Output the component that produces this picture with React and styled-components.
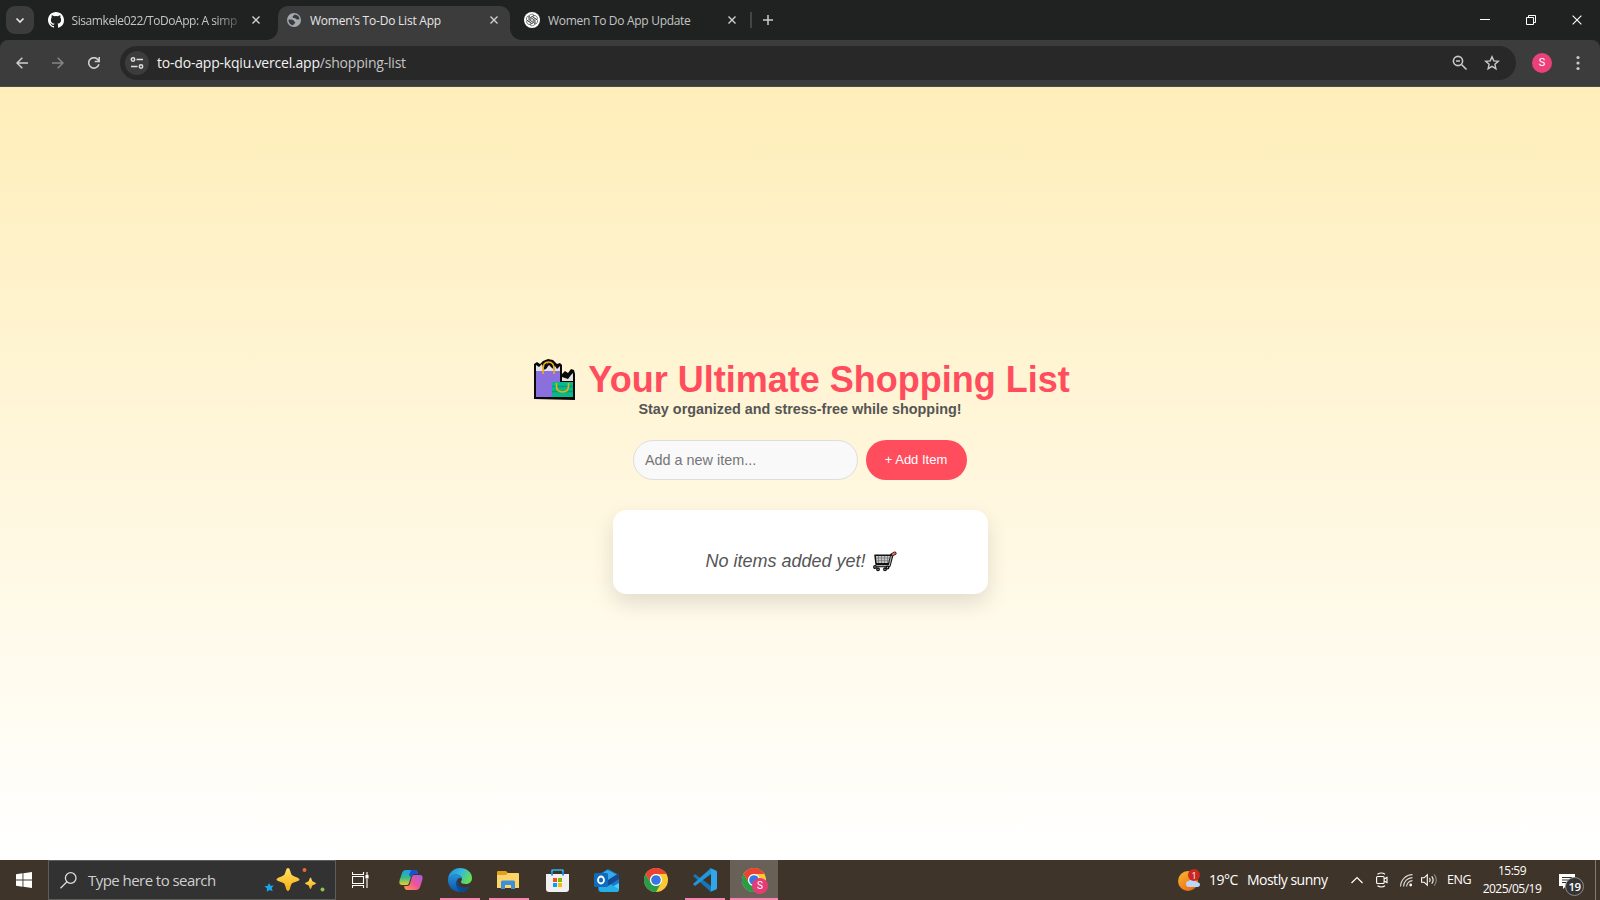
import React from "react";
import styled, { createGlobalStyle } from "styled-components";

const Global = createGlobalStyle`
  * { box-sizing: border-box; }
  body { margin: 0; overflow: hidden; background: #fff; }
`;

const ui = `"Segoe UI", "Open Sans", "Noto Sans", sans-serif`;
const arial = `Arial, "Liberation Sans", sans-serif`;

const Screen = styled.div`
  width: 1600px;
  height: 900px;
  display: flex;
  flex-direction: column;
  overflow: hidden;
  font-family: ${ui};
`;

/* ---------- browser chrome ---------- */
const TabStrip = styled.div`
  height: 40px;
  flex: none;
  display: flex;
  align-items: flex-end;
  background: #202221;
  color: #c9cac9;
`;
const TabSearch = styled.button`
  width: 28px;
  height: 28px;
  margin: 0 6px 6px;
  padding: 0;
  border: 0;
  border-radius: 9px;
  background: #3c3c3c;
  display: grid;
  place-items: center;
`;
const Tab = styled.div`
  position: relative;
  width: ${(p) => p.$width}px;
  height: 34px;
  padding: 0 ${(p) => p.$right || 9}px 6px ${(p) => p.$left}px;
  border-radius: 10px 10px 0 0;
  display: flex;
  align-items: center;
  gap: ${(p) => p.$gap || 8}px;
  background: ${(p) => (p.$active ? "#3c3c3c" : "transparent")};
  color: ${(p) => (p.$active ? "#e6e6e6" : "#c4c5c4")};
  &::before, &::after {
    content: "";
    display: ${(p) => (p.$active ? "block" : "none")};
    position: absolute;
    bottom: 0;
    width: 11px;
    height: 11px;
  }
  &::before { left: -11px; background: radial-gradient(circle at 0 0, transparent 10.5px, #3c3c3c 11px); }
  &::after { right: -11px; background: radial-gradient(circle at 100% 0, transparent 10.5px, #3c3c3c 11px); }
`;
const TabTitle = styled.span`
  flex: 1;
  min-width: 0;
  overflow: hidden;
  white-space: nowrap;
  font-size: 12px;
  line-height: 18px;
  padding-top: 1px;
  letter-spacing: ${(p) => p.$spacing}px;
  ${(p) => p.$fade && "mask-image: linear-gradient(90deg, #000 84%, rgba(0, 0, 0, 0.15) 100%);"}
`;
const CloseSlot = styled.div`
  width: 14px;
  height: 16px;
  display: grid;
  place-items: center;
`;
const TabDivider = styled.div`
  width: 2px;
  height: 16px;
  margin: 0 11px 12px 2px;
  background: #444645;
`;
const NewTab = styled.div`
  height: 40px;
  display: flex;
  align-items: center;
`;
const WindowButtons = styled.div`
  margin-left: auto;
  height: 40px;
  display: flex;
`;
const WindowButton = styled.div`
  width: 46px;
  height: 40px;
  display: grid;
  place-items: center;
`;
const Toolbar = styled.div`
  height: 47px;
  flex: none;
  display: flex;
  align-items: center;
  background: #202221;
`;
const ToolbarInner = styled.div`
  flex: 1;
  height: 47px;
  padding: 0 0 1px;
  display: flex;
  align-items: center;
  border-radius: 8px 8px 0 0;
  border-bottom: 1px solid #4b4a45;
  background: #3c3c3c;
`;
const NavButton = styled.div`
  width: 36px;
  height: 36px;
  display: grid;
  place-items: center;
  opacity: ${(p) => (p.$dim ? 0.5 : 1)};
`;
const NavGroup = styled.div`
  display: flex;
  padding: 0 8px 0 4px;
`;
const Omnibox = styled.div`
  width: 1396px;
  height: 34px;
  padding: 0 16px 0 5px;
  border-radius: 17px;
  background: #282828;
  display: flex;
  align-items: center;
`;
const SiteInfo = styled.div`
  width: 24px;
  height: 24px;
  border-radius: 50%;
  background: #3c3c3c;
  display: grid;
  place-items: center;
`;
const Url = styled.div`
  margin: 0 auto 0 8px;
  font-size: 14px;
  line-height: 20px;
  letter-spacing: -0.2px;
  color: #f2f2f2;
  span { color: #c4c4c4; }
`;
const OmniActions = styled.div`
  display: flex;
  gap: 16px;
`;
const Avatar = styled.div`
  width: 20px;
  height: 20px;
  margin: 0 17px 0 16px;
  border-radius: 50%;
  background: #ec407a;
  color: #fff;
  font: 11px/20px Roboto, sans-serif;
  text-align: center;
`;

/* ---------- page ---------- */
const Page = styled.main`
  height: 773px;
  flex: none;
  padding-top: 272px;
  display: flex;
  flex-direction: column;
  align-items: center;
  background: linear-gradient(#ffeeba, #ffffff);
  font-family: ${arial};
`;
const Title = styled.h1`
  margin: 0;
  height: 41px;
  padding-left: 4px;
  display: flex;
  gap: 12px;
  color: #ff4d5e;
  font-size: 36px;
  line-height: 41px;
  white-space: nowrap;
`;
const Subtitle = styled.p`
  margin: 1px 0 0;
  height: 17px;
  color: #555;
  font-size: 14.4px;
  font-weight: bold;
  line-height: 17px;
`;
const AddForm = styled.div`
  margin-top: 22px;
  display: flex;
  gap: 8px;
`;
const ItemInput = styled.input`
  width: 225px;
  height: 40px;
  padding: 0 11px;
  border: 1px solid #ddd;
  border-radius: 23px;
  outline: 0;
  background: #f9f9f9;
  font: 14.4px ${arial};
  &::placeholder { color: #757575; }
`;
const AddButton = styled.button`
  width: 101px;
  height: 40px;
  padding: 0 1px 2px 0;
  border: 0;
  border-radius: 23px;
  background: #ff4d5e;
  color: #fff;
  font: 13px ${arial};
`;
const ListCard = styled.section`
  width: 375px;
  height: 84px;
  margin-top: 30px;
  padding: 41px 0 0 2px;
  display: flex;
  justify-content: center;
  gap: 7px;
  border-radius: 13.5px;
  background: #fff;
  box-shadow: 0 9px 22px rgba(0, 0, 0, 0.12);
  color: #555;
  font-size: 18px;
  font-style: italic;
  line-height: 21px;
`;

/* ---------- taskbar ---------- */
const Taskbar = styled.footer`
  height: 40px;
  flex: none;
  display: flex;
  background: #3f3429;
  color: #fff;
`;
const StartCell = styled.div`
  width: 48px;
  display: grid;
  place-items: center;
`;
const SearchBox = styled.div`
  width: 288px;
  height: 40px;
  padding: 0 9px 0 11px;
  display: flex;
  align-items: center;
  border: 1px solid #5e5e5c;
  background: #323232;
`;
const SearchText = styled.span`
  margin: 0 auto 1px 11px;
  color: #cfcfcf;
  font-size: 15px;
  letter-spacing: -0.55px;
  white-space: nowrap;
`;
const AppCell = styled.div`
  width: ${(p) => p.$width || 49}px;
  height: 40px;
  padding-right: ${(p) => p.$nudge ?? 1}px;
  display: grid;
  place-items: center;
  position: relative;
  background: ${(p) => (p.$active ? "#696158" : "transparent")};
  &::after {
    content: "";
    display: ${(p) => (p.$open ? "block" : "none")};
    position: absolute;
    bottom: 0;
    left: ${(p) => (p.$active ? 0 : 4)}px;
    right: ${(p) => (p.$active ? 0 : 5)}px;
    height: 2px;
    background: #f884b2;
  }
`;
const Tray = styled.div`
  margin-left: auto;
  display: flex;
  align-items: center;
`;
const Weather = styled.div`
  width: 173px;
  display: flex;
  align-items: center;
  font-size: 14px;
  white-space: nowrap;
`;
const TrayText = styled.span`
  margin-left: ${(p) => p.$left}px;
  margin-bottom: 1px;
  letter-spacing: ${(p) => p.$spacing}px;
  font-size: ${(p) => p.$size || 14}px;
`;
const TrayIcon = styled.div`
  width: ${(p) => p.$width}px;
  display: flex;
`;
const Clock = styled.div`
  width: 80px;
  padding-left: 2px;
  font-size: 12px;
  line-height: 18px;
  text-align: center;
  letter-spacing: -0.5px;
`;
const Notice = styled.div`
  position: relative;
  width: 45px;
  height: 40px;
  padding: 12px 0 0 8px;
  border-right: 1px solid #85796c;
`;
const Count = styled.span`
  position: absolute;
  left: 14px;
  top: 17px;
  width: 19px;
  height: 19px;
  border: 1px solid #8d8d8d;
  border-radius: 50%;
  background: #343434;
  font-size: 11.5px;
  font-weight: 600;
  line-height: 17px;
  letter-spacing: -0.6px;
  text-align: center;
`;
const ScreenEdge = styled.div`
  width: 4px;
`;

const Close = ({ s = 8, c = "#d0d0d0", w = 1.4 }) => (
  <svg width={s} height={s} viewBox="0 0 8 8"><path d="M.5.5l7 7M7.5.5l-7 7" stroke={c} strokeWidth={w * 8 / s} fill="none" /></svg>
);
const TabClose = () => <CloseSlot><Close s={8} /></CloseSlot>;

const GithubMark = () => (
  <svg width="16" height="16" viewBox="0 0 16 16" fill="#fff">
    <path d="M8 0C3.58 0 0 3.58 0 8c0 3.54 2.29 6.53 5.47 7.59.4.07.55-.17.55-.38v-1.33c-2.23.48-2.7-1.07-2.7-1.07-.36-.92-.89-1.17-.89-1.17-.73-.5.05-.49.05-.49.81.06 1.23.83 1.23.83.72 1.23 1.88.87 2.34.67.07-.52.28-.87.51-1.07-1.78-.2-3.65-.89-3.65-3.95 0-.87.31-1.59.82-2.15-.08-.2-.36-1.02.08-2.12 0 0 .67-.21 2.2.82a7.7 7.7 0 0 1 4 0c1.53-1.04 2.2-.82 2.2-.82.44 1.1.16 1.92.08 2.12.51.56.82 1.27.82 2.15 0 3.07-1.87 3.75-3.65 3.95.29.25.54.73.54 1.48v2.2c0 .21.15.46.55.38A8 8 0 0 0 16 8c0-4.42-3.58-8-8-8Z" />
  </svg>
);
const Globe = () => (
  <svg width="14" height="14" viewBox="0 0 14 14">
    <circle cx="7" cy="7" r="7" fill="#a3a9b1" />
    <path d="M7.4 1.6c-.3 1.5-1.9 1.2-1.8 2.4 0 1 .8.9 1.9.9 1.5 0 1.1 1.5 2.4 1.6 1.2 0 1.7-.4 2.6-.2.1-2.3-1.9-4.6-5.1-4.7ZM1.5 6.5c1.4.2 3.7-.1 4.7.6 1 .8.4 1.3 1.4 1.6 1 .2.8 1.2.2 1.5-.9.4-.8 1.5-1.8 2.1C3.2 12 1.3 9.500 1.5 6.500Z" fill="#3c3c3c" />
  </svg>
);
const GptMark = () => (
  <svg width="16" height="16" viewBox="0 0 16 16">
    <circle cx="8" cy="8" r="8" fill="#fff" />
    <g fill="none" stroke="#333" strokeWidth=".6">
      {[0, 60, 120, 180, 240, 300].map((a) => (
        <path key={a} transform={`rotate(${a} 8 8)`} d="M5 8.600V5a2.800 2.800 0 0 1 5.200-1.500L6.700 5.500v3.400" />
      ))}
    </g>
  </svg>
);
const Bags = () => (
  <svg width="42" height="41" viewBox="0 0 42 41">
    <path d="M0 40V5l3-2 3 2 3-3 5-2 5 1 4 4 3-1 2 2v9l3-3 3 2 3-4 3 1 1 4v26Z" fill="#0b0908" />
    <path d="M2 12V6l3 2 3-3 1 4 5-5 5 5 2-2 2 3 3-3v5Z M28 22v-4l3 1 3 1 3-4 2-2v8Z" fill="#e3e0e6" />
    <path d="m9 11 2-5 4-2 4 2 2 5-3-2-3-3-3 4Z" fill="#0b0908" />
    <path d="M2 12h24v26H2Z" fill="#8b6fdf" />
    <path d="M18 23h21v15H18Z" fill="#08b98c" />
    <path d="M18 27.500h21M18 32.500h21" stroke="#079d7c" strokeWidth="1.500" />
    <path d="M9 15V10q0-7 5.500-7T20 10v5" fill="none" stroke="#eeb011" strokeWidth="1.600" />
    <path d="M22.500 24v3q0 6 6 6t6-6v-3" fill="none" stroke="#eeb011" strokeWidth="1.600" />
  </svg>
);
const Cart = () => (
  <svg width="24" height="21" viewBox="0 0 24 21">
    <path d="M21.800 2.300 18.800 4 16 14.500H4" fill="none" stroke="#111" strokeWidth="3.400" strokeLinecap="round" strokeLinejoin="round" />
    <path d="M2 4.200H18L15.700 12.800H3Z" fill="#c9c9c9" stroke="#111" strokeWidth="1.500" strokeLinejoin="round" />
    <path d="M3 7h13.500M3.500 9.700h12.700M5.500 5v7M8.500 5v7M11.500 5v7M14.500 5v7" stroke="#777" strokeWidth=".8" />
    <path d="M3 14.600h13.200L18.500 5" fill="none" stroke="#aaa" strokeWidth="1.200" />
    <path d="m19.800 3.400 2-1.200" stroke="#f06a58" strokeWidth="2" strokeLinecap="round" />
    <g fill="#bbb" stroke="#111" strokeWidth="1.300"><circle cx="2" cy="16" r="1.300" /><circle cx="5" cy="18.300" r="1.300" /><circle cx="12" cy="18.300" r="1.300" /><circle cx="14.500" cy="16.500" r="1.300" /></g>
  </svg>
);
const Sparkles = () => (
  <svg width="62" height="26" viewBox="0 0 62 26">
    <defs><linearGradient id="spark" x2="0" y2="1"><stop stopColor="#ffe063" /><stop offset="1" stopColor="#f6ad12" /></linearGradient></defs>
    <path d="M24 1c2 0 2.200 3.500 3.500 6.500 1 2 8 3 8 5s-7 2.500-8 4.500C26 20 26 24 24 24s-2-4-3.500-7c-1-2-8-2.500-8-4.500s7-3 8-5C22 4.500 22 1 24 1Z" fill="url(#spark)" />
    <path d="M46.500 10.500c1 0 1 2.500 1.800 3.500s3.700 1.300 3.700 2.300-2.900 1.300-3.700 2.300-.8 3.500-1.800 3.500-1-2.500-1.800-3.500-3.700-1.300-3.700-2.300 2.900-1.300 3.700-2.300.8-3.500 1.800-3.500Z" fill="url(#spark)" />
    <path d="m5 16 1.500 2.700 3.200-.2-2 2.500 1 3.200-3-1.200-2.900 1.800.2-3.300L.5 19.300l3.200-.6Z" fill="#16a5ee" />
    <circle cx="40.500" cy="3" r="2" fill="#f26730" /><circle cx="58.500" cy="22.500" r="2" fill="#8cc34b" />
  </svg>
);
const Copilot = () => (
  <svg width="24" height="22" viewBox="0 0 24 22">
    <defs>
      <linearGradient id="cpa" x2="0" y2="1"><stop stopColor="#1f9df0" /><stop offset=".5" stopColor="#36b98b" /><stop offset="1" stopColor="#e7d12a" /></linearGradient>
      <linearGradient id="cpb" x1="1" x2="0" y2="1"><stop stopColor="#a65bea" /><stop offset=".5" stopColor="#ee5596" /><stop offset="1" stopColor="#ff9a4b" /></linearGradient>
    </defs>
    <path d="M7 1h9c2 0 2.500 2 3 4h-4c-2 0-2.500 1-3 3l-2 6c-.5 1.500-1 2-3 2H3c-3 0-3-3-2-6l2-6c.7-2 2-3 4-3Z" fill="url(#cpa)" />
    <path d="M12 1h4c2 0 2.500 2 3 4h-4c-2 0-2.700 1-3.300 3L10 6Z" fill="#1554d0" />
    <path d="M17 21H8c-2 0-2.500-2-3-4h3c2 0 2.500-1 3-2.500L13 8c.5-1.500 1-2 3-2h5c3 0 3 3 2 6l-2 6c-.7 2-2 3-4 3Z" fill="url(#cpb)" />
  </svg>
);
const EdgeLogo = () => (
  <svg width="24" height="24" viewBox="0 0 24 24">
    <defs>
      <linearGradient id="ega" x2="1" y2=".4"><stop stopColor="#1c8bd9" /><stop offset=".55" stopColor="#35b9de" /><stop offset="1" stopColor="#64dc59" /></linearGradient>
      <linearGradient id="egb" x2="0" y2="1"><stop stopColor="#2592df" /><stop offset="1" stopColor="#0d54a5" /></linearGradient>
    </defs>
    <path d="M0 11C1 4 6 0 12 0c7 0 12 4.500 12 10 0 4-3 6-6.500 6-3 0-4.500-1-4.500-2s1-1.500 1-3c0-3-3-4.500-6-4.500C4.500 6.500 1.500 8 0 11Z" fill="url(#ega)" />
    <path d="M0 11c1.500-3 4.500-4.500 8-4.500 3 0 6 1.500 6 4.500-1-1.500-5-2-5 2.500 0 5 5 8 12 5.500C19 22 16 24 12 24 5 24 0 19 0 12Z" fill="url(#egb)" />
    <path d="M9 12c-2 3-1 9 4 12 4 0 7-2 9-5.500-5 3-13 1-13-6.500Z" fill="#0b4a90" />
  </svg>
);
const Folder = () => (
  <svg width="22" height="19" viewBox="0 0 22 19">
    <path d="M0 1q0-1 1-1h8l2 2h10v5H0Z" fill="#e4a01c" /><path d="M0 4h9l2-2h10q1 0 1 1v14H0Z" fill="#fbd568" />
    <path d="M4 18v-7q0-1.500 1.500-1.500h11Q18 9.500 18 11v7h-4v-4H8v4Z" fill="#3c8fd8" />
  </svg>
);
const Store = () => (
  <svg width="23" height="23" viewBox="0 0 23 23">
    <path d="M6 6V1.500Q6 1 6.500 1h10q.5 0 .5.500V6" fill="none" stroke="#2cb4f2" strokeWidth="1.700" />
    <path d="M0 5h23v15q0 3-3 3H3q-3 0-3-3Z" fill="#f0f0f1" /><path d="M5.200 6.500V3h1.700v3.500ZM16.200 6.500V3h1.700v3.500Z" fill="#1684d3" />
    <path d="M7 9h4v4H7Z" fill="#f25022" /><path d="M12 9h4v4h-4Z" fill="#7fba00" /><path d="M7 14h4v4H7Z" fill="#00a4ef" /><path d="M12 14h4v4h-4Z" fill="#ffb900" />
  </svg>
);
const Outlook = () => (
  <svg width="25" height="23" viewBox="0 0 25 23">
    <path d="m4 6 9-5.500q1-.5 2 0L25 6v14q0 3-3 3H7q-3 0-3-3Z" fill="#1c78cf" />
    <path d="m9 4 4.500-3 10 5L14 12Z" fill="#38a9ea" />
    <path d="M25 10v10q0 3-3 3H9l16-9Z" fill="#50d0f5" /><path d="M5 17 14 14l11 6q-.500 3-3 3H8q-3 0-3-3Z" fill="#25aee8" />
    <path d="M25 4v6l-11 7v-6Z" fill="#154a91" /><rect y="4" width="14" height="14" rx="1.500" fill="#0f6cbd" />
    <ellipse cx="7" cy="11" rx="3" ry="3.500" fill="none" stroke="#fff" strokeWidth="1.800" />
  </svg>
);
const Chrome = () => (
  <svg width="24" height="24" viewBox="0 0 24 24">
    <circle cx="12" cy="12" r="12" fill="#fbc934" />
    <path d="M1.600 6A12 12 0 0 1 22.400 6H12a6 6 0 0 0-5.200 9Z" fill="#ea4335" />
    <path d="M1.600 6 6.800 15a6 6 0 0 0 10.400 0L12 24A12 12 0 0 1 1.600 6Z" fill="#279c4a" />
    <circle cx="12" cy="12" r="6" fill="#fff" /><circle cx="12" cy="12" r="4.800" fill="#3478e5" />
  </svg>
);
const ProfileChrome = styled.div`
  position: relative;
  width: 24px;
  height: 24px;
`;
const ProfileBadge = styled.span`
  position: absolute;
  left: 10px;
  top: 10px;
  width: 16px;
  height: 16px;
  border-radius: 50%;
  background: #e63c76;
  color: #fff;
  font: 10px/16px Roboto, sans-serif;
  text-align: center;
`;
const Code = () => (
  <svg width="24" height="24" viewBox="0 0 24 24">
    <path d="m0 8 2-2 16 12v6L0 8Z" fill="#1676ba" /><path d="m0 16 2 2L18 6V0L0 16Z" fill="#2196d9" />
    <path d="m17 0 6 2.500q1 .500 1 1.500v16q0 1-1 1.500L17 24q1-.500 1-2V2q0-1.500-1-2Z" fill="#31a6ed" />
  </svg>
);
const WeatherIcon = () => (
  <svg width="24" height="24" viewBox="0 0 24 24">
    <defs><linearGradient id="sun" x2=".7" y2="1"><stop stopColor="#f8ba32" /><stop offset="1" stopColor="#ee6a12" /></linearGradient></defs>
    <circle cx="10" cy="13" r="10" fill="url(#sun)" />
    <path d="M11 19a3 3 0 0 1 0-6 4 4 0 0 1 7.500 1c2 0 3.500 1 3.500 2.500S21 19 19.500 19Z" fill="#bcd6f8" />
    <circle cx="16" cy="7" r="6" fill="#c8281f" />
    <text x="16" y="10.500" fill="#fff" fontSize="9" textAnchor="middle" fontFamily="Open Sans">1</text>
  </svg>
);

export default function App() {
  return (
    <Screen>
      <Global />
      <TabStrip>
        <TabSearch><svg width="10" height="7" viewBox="0 0 10 7"><path d="m1.500 1.500 3.500 3.500 3.500-3.500" fill="none" stroke="#e5e5e5" strokeWidth="1.700" /></svg></TabSearch>
        <Tab $width={238} $left={8} $right={15} $gap={7.5}>
          <GithubMark />
          <TabTitle $spacing={-0.42} $fade>Sisamkele022/ToDoApp: A simp</TabTitle>
          <TabClose />
        </Tab>
        <Tab $active $width={232} $left={9} $gap={9}>
          <Globe />
          <TabTitle $spacing={-0.22}>Women’s To-Do List App</TabTitle>
          <TabClose />
        </Tab>
        <Tab $width={238} $left={14}>
          <GptMark />
          <TabTitle $spacing={-0.3}>Women To Do App Update</TabTitle>
          <TabClose />
        </Tab>
        <TabDivider />
        <NewTab><svg width="10" height="10" viewBox="0 0 10 10"><path d="M5 0v10M0 5h10" stroke="#ccc" strokeWidth="1.500" /></svg></NewTab>
        <WindowButtons>
          <WindowButton><svg width="10" height="10"><path d="M0 4.500h10" stroke="#fff" /></svg></WindowButton>
          <WindowButton><svg width="10" height="10" fill="none" stroke="#fff"><path d="M.5 2.500h7v7h-7ZM2.500 2V.5h7v7H8" /></svg></WindowButton>
          <WindowButton><Close s={10} c="#fff" w={1.1} /></WindowButton>
        </WindowButtons>
      </TabStrip>
      <Toolbar>
        <ToolbarInner>
          <NavGroup>
            <NavButton><svg width="12" height="12" viewBox="0 0 12 12" fill="none" stroke="#cfcfcf" strokeWidth="1.500"><path d="M12 6H1M6.300.7 1 6l5.300 5.300" /></svg></NavButton>
            <NavButton $dim><svg width="12" height="12" viewBox="0 0 12 12" fill="none" stroke="#cfcfcf" strokeWidth="1.500"><path d="M0 6h11M5.700.7 11 6l-5.300 5.300" /></svg></NavButton>
            <NavButton><svg width="12" height="12" viewBox="0 0 12 12" fill="none" stroke="#cfcfcf" strokeWidth="1.600"><path d="M10.900 7.200A5.200 5.200 0 1 1 10 2.700l1 1.300M11.200 0v4.500H6.700" /></svg></NavButton>
          </NavGroup>
          <Omnibox>
            <SiteInfo>
              <svg width="14" height="12" viewBox="0 0 14 12" fill="none" stroke="#dedede" strokeWidth="1.500"><circle cx="3" cy="2.500" r="1.700" /><path d="M6.500 2.500H13M1 9.500h6.500" /><circle cx="11" cy="9.500" r="1.700" /></svg>
            </SiteInfo>
            <Url>to-do-app-kqiu.vercel.app<span>/shopping-list</span></Url>
            <OmniActions>
              <svg width="16" height="16" viewBox="0 0 16 16" fill="none" stroke="#c9c9c9" strokeWidth="1.600"><circle cx="6" cy="6" r="4.600" /><path d="m9.500 9.500 5 5M4 6h4" /></svg>
              <svg width="16" height="16" viewBox="0 0 16 16" fill="none" stroke="#c9c9c9" strokeWidth="1.400"><path d="m8 1.800 1.800 4.100 4.500.4-3.400 3 1 4.400L8 11.400l-3.900 2.300 1-4.400-3.400-3 4.500-.4Z" /></svg>
            </OmniActions>
          </Omnibox>
          <Avatar>S</Avatar>
          <svg width="18" height="16" viewBox="0 0 18 16" fill="#c9c9c9"><circle cx="9" cy="2.500" r="1.600" /><circle cx="9" cy="8" r="1.600" /><circle cx="9" cy="13.500" r="1.600" /></svg>
        </ToolbarInner>
      </Toolbar>

      <Page>
        <Title><Bags /><span>Your Ultimate Shopping List</span></Title>
        <Subtitle>Stay organized and stress-free while shopping!</Subtitle>
        <AddForm>
          <ItemInput placeholder="Add a new item..." />
          <AddButton>+ Add Item</AddButton>
        </AddForm>
        <ListCard><span>No items added yet!</span><Cart /></ListCard>
      </Page>

      <Taskbar>
        <StartCell><svg width="16" height="16" viewBox="0 0 16 16" fill="#fff"><path d="M0 2.200 6.500 1.300V7.500H0ZM7.400 1.200 16 0V7.500H7.400ZM0 8.400H6.500V14.700L0 13.800ZM7.400 8.400H16V16L7.400 14.800Z" /></svg></StartCell>
        <SearchBox>
          <svg width="17" height="17" viewBox="0 0 17 17" fill="none" stroke="#ddd" strokeWidth="1.300"><circle cx="10.700" cy="6" r="5.300" /><path d="m7 9.700-6.500 6.500" /></svg>
          <SearchText>Type here to search</SearchText>
          <Sparkles />
        </SearchBox>
        <AppCell $width={50} $nudge={2}>
          <svg width="17" height="16" viewBox="0 0 17 16" fill="none" stroke="#fff" strokeWidth="1.100"><path d="M.5 0v2.500h11V0M.5 16v-2.500h11V16M.5 4.500h11v7H.5ZM15 0v3M15 7v9" /><path d="M14 3.500h2v2.500h-2Z" fill="#fff" /></svg>
        </AppCell>
        <AppCell $width={50} $nudge={0}><Copilot /></AppCell>
        <AppCell $open><EdgeLogo /></AppCell>
        <AppCell $open $nudge={3}><Folder /></AppCell>
        <AppCell $nudge={2}><Store /></AppCell>
        <AppCell $nudge={2}><Outlook /></AppCell>
        <AppCell><Chrome /></AppCell>
        <AppCell $open><Code /></AppCell>
        <AppCell $open $active $width={48} $nudge={0}><ProfileChrome><Chrome /><ProfileBadge>S</ProfileBadge></ProfileChrome></AppCell>
        <Tray>
          <Weather><WeatherIcon /><TrayText $left={7} $spacing={-0.5}>19°C</TrayText><TrayText $left={9} $spacing={-0.48}>Mostly sunny</TrayText></Weather>
          <TrayIcon $width={25}><svg width="12" height="8" viewBox="0 0 12 8"><path d="m.5 7 5.500-5.500L11.500 7" fill="none" stroke="#fff" strokeWidth="1.200" /></svg></TrayIcon>
          <TrayIcon $width={24}><svg width="12" height="16" viewBox="0 0 12 16" fill="none" stroke="#fff" strokeWidth="1.100"><rect x=".6" y="4.500" width="7.500" height="7" rx="1" /><path d="m8 7 3-1.500v5L8 9M1.500 2.200Q5.500-.300 9 2.200M1.500 13.800q4 2.500 7.500 0" /></svg></TrayIcon>
          <TrayIcon $width={21}><svg width="13" height="13" viewBox="0 0 13 13" fill="none" stroke="#ddd" strokeWidth="1.100"><path d="M.6 12.500A12 12 0 0 1 12.500.6M3.600 12.500a9 9 0 0 1 8.900-8.900M6.600 12.500a6 6 0 0 1 5.900-5.900" /><circle cx="10.700" cy="11" r="1.400" fill="#fff" stroke="none" /></svg></TrayIcon>
          <TrayIcon $width={26}><svg width="17" height="14" viewBox="0 0 17 14" fill="none" stroke="#fff" strokeWidth="1.100"><path d="M.6 4.800h2.500L6.300 1.800v10.400L3.100 9.200H.6ZM8.500 5q1.500 2 0 4M10.700 3.300q3 3.700 0 7.400" /><path d="M13.200 1.300q4.200 5.700 0 11.400" stroke="#8f887f" /></svg></TrayIcon>
          <TrayText $left={0} $spacing={-0.5} $size={12.5}>ENG</TrayText>
          <Clock>15:59<br />2025/05/19</Clock>
          <Notice>
            <svg width="16" height="15" viewBox="0 0 16 15"><path d="M0 0h16v12H7l-3 3v-3H0Z" fill="#fff" /><path d="M3 3.500h10M3 6h10M3 8.500h7" stroke="#3f3429" /></svg>
            <Count>19</Count>
          </Notice>
          <ScreenEdge />
        </Tray>
      </Taskbar>
    </Screen>
  );
}
